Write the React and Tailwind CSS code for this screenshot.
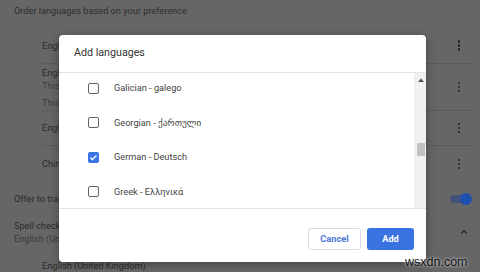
import React from 'react';

const Dots = () => (
  <div className="flex flex-col items-center gap-[1.5px] w-[4px]">
    <span className="block w-[2.5px] h-[2.5px] rounded-full bg-[#242424]" />
    <span className="block w-[2.5px] h-[2.5px] rounded-full bg-[#242424]" />
    <span className="block w-[2.5px] h-[2.5px] rounded-full bg-[#242424]" />
  </div>
);

const Checkbox = ({ checked }) =>
  checked ? (
    <span className="flex items-center justify-center w-[11px] h-[11px] rounded-[2px] bg-[#3b74e3]">
      <svg width="9" height="9" viewBox="0 0 24 24" fill="none" stroke="#fff" strokeWidth="3.5">
        <path d="M4 12.5l5 5L20 6.5" />
      </svg>
    </span>
  ) : (
    <span className="block w-[11px] h-[11px] rounded-[2px] border-[1.6px] border-[#5f6368]" />
  );

const languages = [
  { label: 'Galician - galego', checked: false },
  { label: 'Georgian - ქართული', checked: false },
  { label: 'German - Deutsch', checked: true },
  { label: 'Greek - Ελληνικά', checked: false },
];

export default function App() {
  return (
    <div className="relative w-[480px] h-[272px] overflow-hidden bg-[#666666] text-[9.2px] text-[#2c2c2c] font-['Roboto','DejaVu_Sans',sans-serif]">
      {/* Settings page behind the dialog */}
      <div className="pl-[14px] pr-[8px]">
        <div className="h-[28px] pb-[6px] flex items-center text-[#2e2e2e]">
          Order languages based on your preference
        </div>

        <div className="ml-[28px] border-b border-[#5c5c5c]">
          <div className="h-[35px] flex items-center justify-between pr-[11px]">
            <span>English (United States)</span>
            <Dots />
          </div>
        </div>

        <div className="ml-[28px] border-b border-[#5c5c5c]">
          <div className="h-[46px] flex items-center justify-between pr-[11px]">
            <div className="flex flex-col pt-[1px]">
              <span className="leading-[13px]">English</span>
              <span className="leading-[13px] text-[#3e3e3e]">This language is used to display the UI</span>
              <span className="leading-[13px] mt-[4px] text-[#3e3e3e]">This language is used for translation</span>
            </div>
            <Dots />
          </div>
        </div>

        <div className="ml-[28px] border-b border-[#5c5c5c]">
          <div className="h-[34px] flex items-center justify-between pr-[11px]">
            <span>English (United Kingdom)</span>
            <Dots />
          </div>
        </div>

        <div className="ml-[28px]">
          <div className="h-[36px] flex items-center justify-between pr-[11px]">
            <span>Chinese (Simplified)</span>
            <Dots />
          </div>
        </div>

        <div className="h-[34px] flex items-center justify-between">
          <span>Offer to translate pages that aren't in a language you read</span>
          <span className="relative flex items-center w-[22px] h-[12px]">
            <span className="block w-[20px] h-[8px] rounded-full bg-[#435278]" />
            <span className="absolute right-0 w-[12px] h-[12px] rounded-full bg-[#1f4fae]" />
          </span>
        </div>

        <div className="h-[32px] flex items-center justify-between pr-[3px]">
          <div className="flex flex-col">
            <span className="leading-[13px]">Spell check</span>
            <span className="leading-[13px] text-[#3a3a3a]">English (United States)</span>
          </div>
          <svg width="10" height="10" viewBox="0 0 24 24" fill="none" stroke="#262626" strokeWidth="3">
            <path d="M6 15l6-6 6 6" />
          </svg>
        </div>

        <div className="ml-[28px] h-[25px] flex items-end">
          <span>English (United Kingdom)</span>
        </div>
      </div>

      {/* Add languages dialog */}
      <div className="absolute left-[59px] top-[35px] w-[367px] h-[227px] flex flex-col bg-white rounded-[4px] shadow-[0_2px_10px_rgba(0,0,0,0.35)] overflow-hidden">
        <div className="h-[38px] shrink-0 flex items-center pl-[15px] pb-[1px] border-b border-[#e3e3e3] text-[10.7px] text-[#333]">
          Add languages
        </div>

        <div className="h-[136px] shrink-0 flex border-b border-[#e3e3e3]">
          <div className="flex-1 overflow-hidden">
            <div className="-mt-[2px]">
              {languages.map((lang) => (
                <div key={lang.label} className="h-[34.5px] flex items-center pl-[29px] gap-[15px] text-[#444]">
                  <Checkbox checked={lang.checked} />
                  <span>{lang.label}</span>
                </div>
              ))}
            </div>
          </div>
          <div className="w-[12px] bg-[#f1f1f1] border-l border-[#ececec] flex flex-col items-center">
            <svg className="mt-[5px]" width="6" height="4" viewBox="0 0 6 4">
              <path d="M0 4L3 0.5L6 4Z" fill="#505050" />
            </svg>
            <div className="mt-[61px] w-[8px] h-[13px] bg-[#c1c1c1]" />
          </div>
        </div>

        <div className="flex-1 flex items-start justify-end gap-[6px] pt-[19px] pr-[12px]">
          <button className="w-[53px] h-[22px] rounded-[3px] border border-[#dadce0] bg-white text-[9.2px] font-bold text-[#4a78d6]">
            Cancel
          </button>
          <button className="w-[47px] h-[22px] rounded-[3px] bg-[#3b72e2] text-[9.2px] font-bold text-white">
            Add
          </button>
        </div>
      </div>

      {/* watermark */}
      <span className="absolute left-[405px] top-[254px] text-[12.5px] leading-[16px] text-[#111] font-['Liberation_Sans',sans-serif] [text-shadow:0_0_3px_#fff]">
        wsxdn.com
      </span>
    </div>
  );
}
